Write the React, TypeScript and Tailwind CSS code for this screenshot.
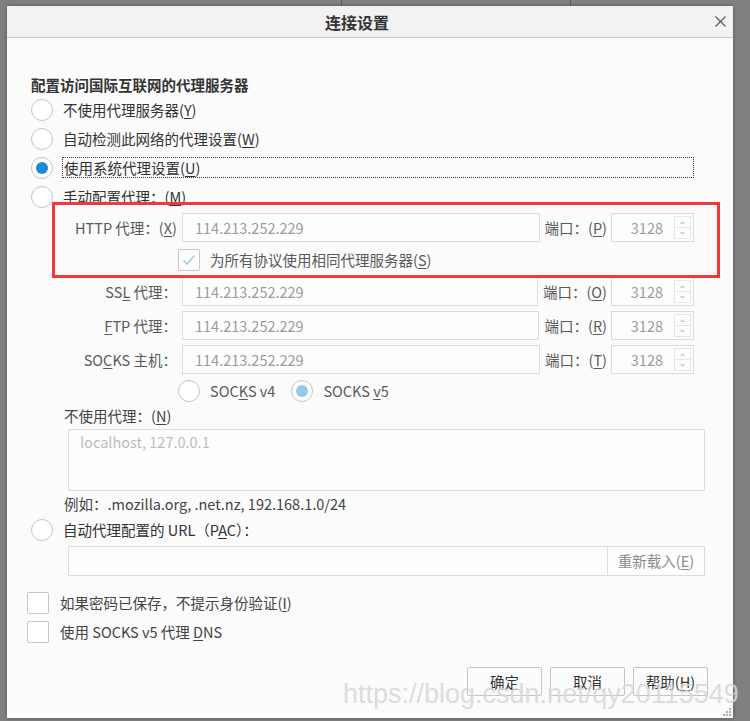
import React from 'react';

function U({ children }: { children: React.ReactNode }) {
  return <span className="underline decoration-1 underline-offset-[2px]">{children}</span>;
}

function Radio({ checked = false, muted = false }: { checked?: boolean; muted?: boolean }) {
  return (
    <span className="w-[22px] h-[22px] shrink-0 rounded-full border border-[#c6c6c6] bg-white flex items-center justify-center">
      {checked && (
        <span className={`w-[12px] h-[12px] rounded-full ${muted ? 'bg-[#8fcaeb]' : 'bg-[#1b89d6]'}`} />
      )}
    </span>
  );
}

function Checkbox({ checked = false }: { checked?: boolean }) {
  return (
    <span className="w-[22px] h-[22px] shrink-0 rounded-[2px] border border-[#c6c6c6] bg-white flex items-center justify-center">
      {checked && (
        <svg width="14" height="12" viewBox="0 0 14 12">
          <path d="M1.5 6.5 L5 10 L12.5 1.5" fill="none" stroke="#9ccbe8" strokeWidth="1.6" />
        </svg>
      )}
    </span>
  );
}

function PortBox() {
  return (
    <div className="ml-[4px] w-[83px] h-full border border-[#dcdcdc] bg-[#fdfdfd] flex items-center">
      <span className="flex-1 text-right pr-[11px] text-[#9b9b9b]">3128</span>
      <div className="w-[17px] h-[23px] mr-[2px] flex flex-col border border-[#e6e6e6]">
        <div className="flex-1 border-b border-[#e6e6e6] flex items-center justify-center">
          <svg width="5" height="3" viewBox="0 0 5 3">
            <path d="M0 3 L2.5 0 L5 3 Z" fill="#d0d0d0" />
          </svg>
        </div>
        <div className="flex-1 flex items-center justify-center">
          <svg width="5" height="3" viewBox="0 0 5 3">
            <path d="M0 0 L2.5 3 L5 0 Z" fill="#d0d0d0" />
          </svg>
        </div>
      </div>
    </div>
  );
}

function ProxyRow({ label, port, className = '' }: { label: React.ReactNode; port: React.ReactNode; className?: string }) {
  return (
    <div className={`flex items-center h-[29px] w-[630px] ml-[33px] ${className}`}>
      <div className="w-[113px] text-right text-[#5a5a5a] whitespace-nowrap">{label}</div>
      <div className="ml-[5px] flex-1 h-full border border-[#dcdcdc] bg-[#fdfdfd] pl-[12px] flex items-center text-[#9b9b9b]">
        114.213.252.229
      </div>
      <div className="ml-[5px] text-[#5a5a5a] whitespace-nowrap">{port}</div>
      <PortBox />
    </div>
  );
}

function RadioRow({ checked = false, children, focused = false }: { checked?: boolean; children: React.ReactNode; focused?: boolean }) {
  return (
    <div className="h-[29px] flex items-center">
      <Radio checked={checked} />
      {focused ? (
        <span className="ml-[9px] w-[632px] h-[21px] border border-dotted border-[#333] flex items-center pl-[1px] text-[#333]">
          {children}
        </span>
      ) : (
        <span className="ml-[10px] text-[#333]">{children}</span>
      )}
    </div>
  );
}

function Button({ children }: { children: React.ReactNode }) {
  return (
    <button className="w-[75px] h-[29px] border border-[#c4c4c4] rounded-[2px] bg-[#fbfbfb] text-[#333] flex items-center justify-center">
      {children}
    </button>
  );
}

export default function App() {
  return (
    <div className="relative w-[750px] h-[721px] overflow-hidden bg-[#808080] pt-[6px] pl-[7px] font-['Noto_Sans_CJK_SC','Noto_Sans',sans-serif] text-[14.5px] leading-[20px]">
      {/* dimmed page behind the dialog */}
      <div className="absolute left-[341px] top-0 w-px h-[6px] bg-[#5c5c5c]" />
      <div className="absolute left-[570px] top-0 w-px h-[6px] bg-[#5c5c5c]" />

      <div className="relative w-[726px] h-[712px] bg-[#fbfbfb] flex flex-col shadow-[0_0_4px_rgba(0,0,0,0.35)]">
        <div className="h-[32px] shrink-0 bg-[#f2f2f2] border-b border-[#c8c8c8] flex items-center">
          <div className="flex-1 text-center text-[16px] font-bold text-[#333]">连接设置</div>
          <div className="w-[26px] flex items-center justify-center">
            <svg width="11" height="11" viewBox="0 0 11 11">
              <path d="M0.5 0.5 L10.5 10.5 M10.5 0.5 L0.5 10.5" stroke="#555" strokeWidth="1.1" />
            </svg>
          </div>
        </div>

        <div className="flex flex-col pl-[24px] pt-[37px]">
          <div className="h-[20px] font-bold text-[#333]">配置访问国际互联网的代理服务器</div>

          <RadioRow>不使用代理服务器(<U>Y</U>)</RadioRow>
          <RadioRow>自动检测此网络的代理设置(<U>W</U>)</RadioRow>
          <RadioRow checked focused>使用系统代理设置(<U>U</U>)</RadioRow>
          <RadioRow>手动配置代理：(<U>M</U>)</RadioRow>

          <ProxyRow className="mt-[2px]" label={<>HTTP 代理：(<U>X</U>)</>} port={<>端口：(<U>P</U>)</>} />

          <div className="mt-[6px] h-[23px] flex items-center ml-[147px]">
            <Checkbox checked />
            <span className="ml-[10px] text-[#5a5a5a]">为所有协议使用相同代理服务器(<U>S</U>)</span>
          </div>

          <ProxyRow className="mt-[6px]" label={<>SS<U>L</U> 代理：</>} port={<>端口：(<U>O</U>)</>} />
          <ProxyRow className="mt-[5px]" label={<><U>F</U>TP 代理：</>} port={<>端口：(<U>R</U>)</>} />
          <ProxyRow className="mt-[5px]" label={<>SO<U>C</U>KS 主机：</>} port={<>端口：(<U>T</U>)</>} />

          <div className="mt-[5px] h-[23px] flex items-center ml-[147px] text-[#5a5a5a]">
            <Radio />
            <span className="ml-[10px]">SOC<U>K</U>S v4</span>
            <span className="ml-[16px]"><Radio checked muted /></span>
            <span className="ml-[10px]">SOCKS <U>v</U>5</span>
          </div>

          <div className="mt-[4px] h-[20px] ml-[33px] text-[#444]">不使用代理：(<U>N</U>)</div>

          <div className="mt-[3px] ml-[37px] w-[637px] h-[62px] border border-[#dcdcdc] bg-[#fdfdfd] pl-[11px] pt-[2px] text-[#bcbcbc]">
            localhost, 127.0.0.1
          </div>

          <div className="mt-[3px] h-[20px] ml-[33px] text-[#444]">例如：.mozilla.org, .net.nz, 192.168.1.0/24</div>

          <div className="mt-[5px] h-[22px] flex items-center">
            <Radio />
            <span className="ml-[10px] text-[#333]">自动代理配置的 URL（P<U>A</U>C）：</span>
          </div>

          <div className="mt-[5px] ml-[37px] w-[637px] h-[30px] border border-[#dcdcdc] bg-[#fdfdfd] flex">
            <div className="flex-1" />
            <div className="w-[97px] border-l border-[#dcdcdc] flex items-center justify-center text-[#8c8c8c]">
              重新载入(<U>E</U>)
            </div>
          </div>

          <div className="mt-[16px] h-[22px] flex items-center ml-[-4px]">
            <Checkbox />
            <span className="ml-[11px] text-[#444]">如果密码已保存，不提示身份验证(<U>I</U>)</span>
          </div>
          <div className="mt-[7px] h-[22px] flex items-center ml-[-4px]">
            <Checkbox />
            <span className="ml-[11px] text-[#444]">使用 SOCKS v5 代理 <U>D</U>NS</span>
          </div>

          <div className="mt-[24px] flex justify-end gap-[8px] pr-[25px]">
            <Button>确定</Button>
            <Button>取消</Button>
            <Button>帮助(<U>H</U>)</Button>
          </div>
        </div>

        {/* resize grip */}
        <svg className="absolute right-[2px] bottom-[2px]" width="8" height="8" viewBox="0 0 8 8">
          <rect x="6" y="0" width="2" height="2" fill="#b0b0b0" />
          <rect x="3" y="3" width="2" height="2" fill="#b0b0b0" />
          <rect x="6" y="3" width="2" height="2" fill="#b0b0b0" />
          <rect x="0" y="6" width="2" height="2" fill="#b0b0b0" />
          <rect x="3" y="6" width="2" height="2" fill="#b0b0b0" />
          <rect x="6" y="6" width="2" height="2" fill="#b0b0b0" />
        </svg>
      </div>

      {/* annotation box */}
      <div className="absolute left-[52px] top-[202px] w-[668px] h-[76px] border-[3px] border-[#f03a3a]" />

      {/* watermark */}
      <div className="absolute left-[343px] top-[681px] text-[27px] leading-[27px] font-['Liberation_Sans',sans-serif] text-[rgba(215,215,215,0.85)] whitespace-nowrap pointer-events-none">
        https://blog.csdn.net/qy20115549
      </div>
    </div>
  );
}
